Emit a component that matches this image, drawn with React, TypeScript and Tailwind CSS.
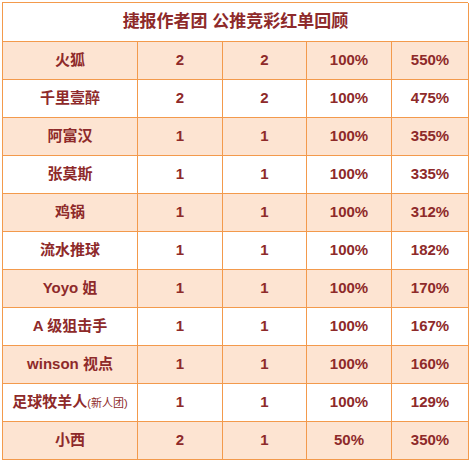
import React from "react";

const rows: [React.ReactNode, string, string, string, string][] = [
  ["火狐", "2", "2", "100%", "550%"],
  ["千里壹醉", "2", "2", "100%", "475%"],
  ["阿富汉", "1", "1", "100%", "355%"],
  ["张莫斯", "1", "1", "100%", "335%"],
  ["鸡锅", "1", "1", "100%", "312%"],
  ["流水推球", "1", "1", "100%", "182%"],
  ["Yoyo 姐", "1", "1", "100%", "170%"],
  ["A 级狙击手", "1", "1", "100%", "167%"],
  ["winson 视点", "1", "1", "100%", "160%"],
  [
    <span key="x">
      足球牧羊人<span className="text-[11px] font-normal">(新人团)</span>
    </span>,
    "1",
    "1",
    "100%",
    "129%",
  ],
  ["小西", "2", "1", "50%", "350%"],
];

export default function App() {
  return (
    <div className="w-[473px] h-[461px] bg-white pt-[2px] pl-[2px]">
      <div
        className="w-[466px] grid grid-cols-[135px_85px_84px_85px_77px] border-l border-t border-[#f39a4c] text-[#8e2a2a] font-bold"
        style={{ fontFamily: '"Liberation Sans", "Noto Sans CJK SC", sans-serif' }}
      >
        <div className="col-span-5 h-[39px] flex items-center justify-center border-r border-b border-[#f39a4c] text-[17px] bg-white">
          捷报作者团 公推竞彩红单回顾
        </div>
        {rows.map((r, i) => {
          const bg = i % 2 === 0 ? "bg-[#fde4d2]" : "bg-white";
          return (
            <React.Fragment key={i}>
              {r.map((c, j) => (
                <div
                  key={j}
                  className={`h-[38px] flex items-center justify-center border-r border-b border-[#f39a4c] text-[15px] ${bg}`}
                >
                  {c}
                </div>
              ))}
            </React.Fragment>
          );
        })}
      </div>
    </div>
  );
}
